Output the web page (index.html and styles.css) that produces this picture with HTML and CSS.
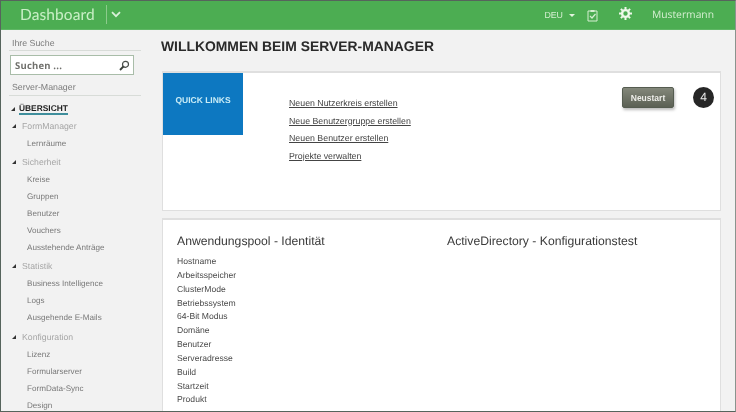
FILE: index.html
```html
<!DOCTYPE html>
<html lang="de">
<head>
<meta charset="utf-8">
<title>Dashboard</title>
<link rel="stylesheet" href="styles.css">
</head>
<body>
<div class="frame">
  <header class="topbar">
    <div class="brand">Dashboard</div>
    <div class="brand-menu">
      <svg width="10" height="7" viewBox="0 0 10 7"><path d="M1 1.2 5 5.2 9 1.2" fill="none" stroke="#d8f0d8" stroke-width="1.8"/></svg>
    </div>
    <div class="top-right">
      <span class="lang">DEU</span>
      <span class="caret"></span>
      <svg class="task" width="11" height="13" viewBox="0 0 11 13"><path d="M1 2h9v10H1z" fill="none" stroke="#d6efd2" stroke-width="1"/><path d="M3.5 1h4v2h-4z" fill="#d6efd2"/><path d="M3 7l2 2 3.5-4" fill="none" stroke="#d6efd2" stroke-width="1.2"/></svg>
      <svg class="gear" width="13" height="13" viewBox="0 0 13 13"><circle cx="6.5" cy="6.5" r="3.4" fill="none" stroke="#eef8ea" stroke-width="2.4"/><path d="M6.5 0v13M0 6.5h13M1.9 1.9l9.2 9.2M11.1 1.9l-9.2 9.2" stroke="#eef8ea" stroke-width="2" stroke-dasharray="2.4 8.2 2.4"/></svg>
      <span class="user">Mustermann</span>
    </div>
  </header>
  <div class="content">
    <aside class="sidebar">
      <div class="side-label">Ihre Suche</div>
      <div class="search">
        <span class="search-text">Suchen ...</span>
        <svg width="11" height="11" viewBox="0 0 11 11"><circle cx="6.5" cy="4.3" r="3" fill="none" stroke="#4a4f4a" stroke-width="1.2"/><path d="M4.4 6.5 1 10" stroke="#3a3f3a" stroke-width="1.8"/></svg>
      </div>
      <div class="side-label second">Server-Manager</div>
      <nav class="tree">
        <div class="root"><i class="tri"></i><span class="root-link">ÜBERSICHT</span></div>
        <div class="group"><i class="tri"></i>FormManager</div>
        <a class="leaf">Lernräume</a>
        <div class="group"><i class="tri"></i>Sicherheit</div>
        <a class="leaf">Kreise</a>
        <a class="leaf">Gruppen</a>
        <a class="leaf">Benutzer</a>
        <a class="leaf">Vouchers</a>
        <a class="leaf">Ausstehende Anträge</a>
        <div class="group"><i class="tri"></i>Statistik</div>
        <a class="leaf">Business Intelligence</a>
        <a class="leaf">Logs</a>
        <a class="leaf">Ausgehende E-Mails</a>
        <div class="group last"><i class="tri"></i>Konfiguration</div>
        <a class="leaf">Lizenz</a>
        <a class="leaf">Formularserver</a>
        <a class="leaf">FormData-Sync</a>
        <a class="leaf">Design</a>
      </nav>
    </aside>
    <main class="main">
      <h1 class="title">WILLKOMMEN BEIM SERVER-MANAGER</h1>
      <section class="panel quick">
        <div class="quick-tile">QUICK LINKS</div>
        <div class="quick-links">
          <a>Neuen Nutzerkreis erstellen</a>
          <a>Neue Benutzergruppe erstellen</a>
          <a>Neuen Benutzer erstellen</a>
          <a>Projekte verwalten</a>
        </div>
        <div class="actions">
          <button class="restart">Neustart</button>
          <span class="badge">4</span>
        </div>
      </section>
      <section class="panel info">
        <div class="col col-a">
          <h2>Anwendungspool - Identität</h2>
          <ul>
            <li>Hostname</li>
            <li>Arbeitsspeicher</li>
            <li>ClusterMode</li>
            <li>Betriebssystem</li>
            <li>64-Bit Modus</li>
            <li>Domäne</li>
            <li>Benutzer</li>
            <li>Serveradresse</li>
            <li>Build</li>
            <li>Startzeit</li>
            <li>Produkt</li>
          </ul>
        </div>
        <div class="col">
          <h2>ActiveDirectory - Konfigurationstest</h2>
        </div>
      </section>
    </main>
  </div>
</div>
</body>
</html>
```
FILE: styles.css
```css
* { box-sizing: border-box; }
html, body { margin: 0; padding: 0; }
body { font-family: "Liberation Sans", Arial, sans-serif; background: #f2f2f2; text-rendering: geometricPrecision; }
.frame {
  width: 736px; height: 412px; overflow: hidden;
  border: 1px solid #56645c; border-right-color: #8a948e;
  background: #f2f2f2; display: flex; flex-direction: column;
  filter: blur(.3px);
}
.topbar {
  height: 29px; flex: none; background: #4cad52; display: flex; align-items: center;
  border-bottom: 1px solid #5fb765;
}
.brand {
  margin-left: 19px; width: 86px; color: #c9efc6; font-family: Lato, sans-serif;
  font-size: 15.5px; letter-spacing: .1px; line-height: 27px;
}
.brand-menu {
  height: 19px; border-left: 1px solid #8ccb8c; padding-left: 4px; margin-top: -1px;
  display: flex; align-items: center;
}
.top-right { margin-left: auto; display: flex; align-items: center; color: #d6efd2; }
.lang { font-size: 8.8px; margin-right: 6px; }
.caret { width: 0; height: 0; border: 3px solid transparent; border-top: 3.5px solid #e3f4df; border-bottom: 0; margin-right: 12px; }
.task { margin-right: 21px; }
.gear { margin-right: 20px; margin-top: -4px; }
.user { font-family: "Open Sans", sans-serif; font-size: 10.3px; margin-right: 21px; }
.content { flex: 1; display: flex; min-height: 0; }
.sidebar { width: 146px; flex: none; padding: 6px 6px 0 8px; color: #808080; }
.side-label {
  font-size: 8.8px; height: 15px; line-height: 15px; padding-left: 3px; border-bottom: 1px solid #d8dcd8; color: #7c7c7c;
}
.side-label.second { margin-top: 4px; height: 17px; line-height: 16px; }
.search {
  margin: 4px 0 0 1px; width: 124px; height: 20px; background: #fff; border: 1px solid #a9bda9;
  display: flex; align-items: center; justify-content: space-between; padding: 0 3px 0 4px;
}
.search-text { font-family: "Open Sans", sans-serif; font-weight: bold; font-size: 9.5px; color: #70706c; letter-spacing: .2px; }
.tree { display: flex; flex-direction: column; }
.tri {
  display: inline-block; width: 0; height: 0; border-style: solid; border-width: 0 0 4px 4px;
  border-color: transparent transparent #333 transparent;
}
.root { height: 20px; padding: 5px 0 0 2px; display: flex; align-items: center; font-size: 8.4px; font-weight: bold; color: #1c1c1c; }
.root .tri { margin-right: 4px; }
.root-link { border-bottom: 2px solid #3f8e9c; line-height: 10px; }
.group { height: 19px; padding: 0 0 0 3px; display: flex; align-items: center; font-size: 8.7px; color: #a6a6a6; }
.group.last { height: 20px; padding-top: 1px; }
.group .tri { margin-right: 6px; }
.leaf { height: 17px; line-height: 17px; padding-left: 18px; font-size: 8.1px; color: #787878; }
.main { flex: 1; min-width: 0; padding: 0 15px; }
.title { margin: 0 0 0 -1px; height: 41px; padding-top: 7px; font-size: 13.9px; line-height: 18px; font-weight: bold; color: #2a2a2a; }
.panel { background: #fff; border: 1px solid #dfdfdf; border-top-width: 2px; width: 559px; }
.quick { height: 140px; display: flex; }
.quick-tile {
  width: 80px; height: 62px; background: #0d78c1; color: #c9ecf6; font-size: 8.5px; font-weight: bold;
  display: flex; align-items: center; justify-content: center; padding-bottom: 8px; flex: none;
}
.quick-links { margin-left: 46px; padding-top: 22px; display: flex; flex-direction: column; font-size: 8.8px; color: #444; }
.quick-links a { height: 17.5px; line-height: 17px; text-decoration: underline; }
.actions { margin-left: auto; display: flex; align-items: flex-start; padding: 14px 6px 0 0; }
.restart {
  width: 52px; height: 21px; padding: 0; border: 1px solid #555c50; border-radius: 2px;
  background: linear-gradient(#83877a, #5b6054); color: #eeeeea; font: bold 8.5px "Liberation Sans", sans-serif;
  box-shadow: 1px 2px 3px #bbb; margin-right: 19px;
}
.badge {
  width: 21px; height: 21px; border-radius: 50%; background: #262626; color: #e8e8e8;
  font-size: 12px; line-height: 21px; text-align: center;
}
.info { margin-top: 7px; height: 200px; display: flex; padding: 14px 0 0 14px; }
.col-a { width: 270px; }
.col h2 { margin: 0 0 6px; font-size: 12.2px; line-height: 15px; font-weight: normal; color: #3a3a3a; }
.col ul { margin: 0; padding: 0; list-style: none; font-size: 8.6px; line-height: 13.85px; color: #4a4a4a; }
```
